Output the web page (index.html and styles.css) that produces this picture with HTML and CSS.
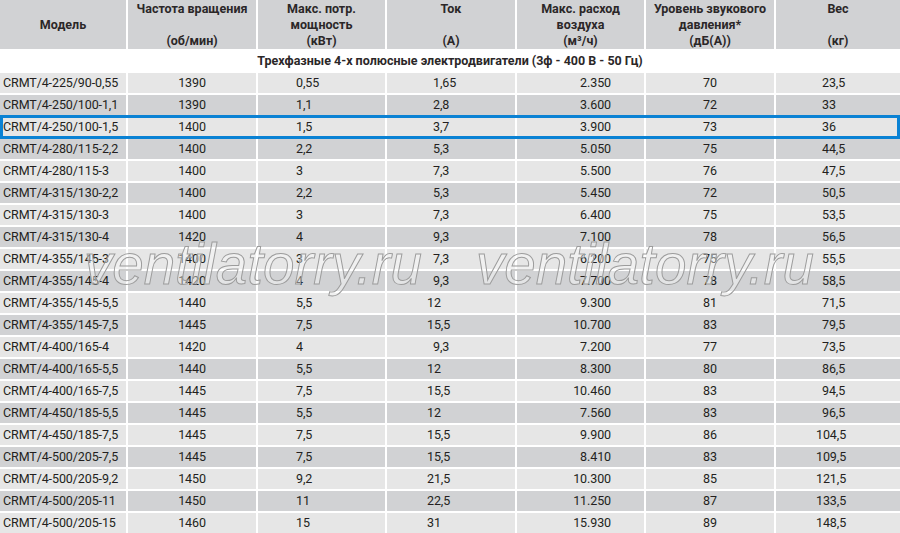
FILE: index.html
```html
<!DOCTYPE html>
<html lang="ru">
<head>
<meta charset="utf-8">
<title>CRMT/4</title>
<link rel="stylesheet" href="styles.css">
</head>
<body>
<div class="sheet">
  <div class="table">
    <div class="row head">
      <div class="h">Модель</div>
      <div class="h">Частота вращения<br><br>(об/мин)</div>
      <div class="h">Макс. потр.<br>мощность<br>(кВт)</div>
      <div class="h">Ток<br><br>(А)</div>
      <div class="h">Макс. расход<br>воздуха<br>(м³/ч)</div>
      <div class="h">Уровень звукового<br>давления*<br>(дБ(А))</div>
      <div class="h">Вес<br><br>(кг)</div>
    </div>
    <div class="group">Трехфазные 4-х полюсные электродвигатели (3ф - 400 В - 50 Гц)</div>
    <div class="body">
      <div class="row"><div class="c1">CRMT/4-225/90-0,55</div><div class="c2">1390</div><div class="c3">0,55</div><div class="c4">1,65</div><div class="c5">2.350</div><div class="c6">70</div><div class="c7">23,5</div></div>
      <div class="row"><div class="c1">CRMT/4-250/100-1,1</div><div class="c2">1390</div><div class="c3">1,1</div><div class="c4">2,8</div><div class="c5">3.600</div><div class="c6">72</div><div class="c7">33</div></div>
      <div class="row hl"><div class="c1">CRMT/4-250/100-1,5</div><div class="c2">1400</div><div class="c3">1,5</div><div class="c4">3,7</div><div class="c5">3.900</div><div class="c6">73</div><div class="c7">36</div></div>
      <div class="row"><div class="c1">CRMT/4-280/115-2,2</div><div class="c2">1400</div><div class="c3">2,2</div><div class="c4">5,3</div><div class="c5">5.050</div><div class="c6">75</div><div class="c7">44,5</div></div>
      <div class="row"><div class="c1">CRMT/4-280/115-3</div><div class="c2">1400</div><div class="c3">3</div><div class="c4">7,3</div><div class="c5">5.500</div><div class="c6">76</div><div class="c7">47,5</div></div>
      <div class="row"><div class="c1">CRMT/4-315/130-2,2</div><div class="c2">1400</div><div class="c3">2,2</div><div class="c4">5,3</div><div class="c5">5.450</div><div class="c6">72</div><div class="c7">50,5</div></div>
      <div class="row"><div class="c1">CRMT/4-315/130-3</div><div class="c2">1400</div><div class="c3">3</div><div class="c4">7,3</div><div class="c5">6.400</div><div class="c6">75</div><div class="c7">53,5</div></div>
      <div class="row"><div class="c1">CRMT/4-315/130-4</div><div class="c2">1420</div><div class="c3">4</div><div class="c4">9,3</div><div class="c5">7.100</div><div class="c6">78</div><div class="c7">56,5</div></div>
      <div class="row"><div class="c1">CRMT/4-355/145-3</div><div class="c2">1400</div><div class="c3">3</div><div class="c4">7,3</div><div class="c5">6.200</div><div class="c6">75</div><div class="c7">55,5</div></div>
      <div class="row"><div class="c1">CRMT/4-355/145-4</div><div class="c2">1420</div><div class="c3">4</div><div class="c4">9,3</div><div class="c5">7.700</div><div class="c6">78</div><div class="c7">58,5</div></div>
      <div class="row"><div class="c1">CRMT/4-355/145-5,5</div><div class="c2">1440</div><div class="c3">5,5</div><div class="c4 wide">12</div><div class="c5">9.300</div><div class="c6">81</div><div class="c7">71,5</div></div>
      <div class="row"><div class="c1">CRMT/4-355/145-7,5</div><div class="c2">1445</div><div class="c3">7,5</div><div class="c4 wide">15,5</div><div class="c5">10.700</div><div class="c6">83</div><div class="c7">79,5</div></div>
      <div class="row"><div class="c1">CRMT/4-400/165-4</div><div class="c2">1420</div><div class="c3">4</div><div class="c4">9,3</div><div class="c5">7.200</div><div class="c6">77</div><div class="c7">73,5</div></div>
      <div class="row"><div class="c1">CRMT/4-400/165-5,5</div><div class="c2">1440</div><div class="c3">5,5</div><div class="c4 wide">12</div><div class="c5">8.300</div><div class="c6">80</div><div class="c7">86,5</div></div>
      <div class="row"><div class="c1">CRMT/4-400/165-7,5</div><div class="c2">1445</div><div class="c3">7,5</div><div class="c4 wide">15,5</div><div class="c5">10.460</div><div class="c6">83</div><div class="c7">94,5</div></div>
      <div class="row"><div class="c1">CRMT/4-450/185-5,5</div><div class="c2">1445</div><div class="c3">5,5</div><div class="c4 wide">12</div><div class="c5">7.560</div><div class="c6">83</div><div class="c7">96,5</div></div>
      <div class="row"><div class="c1">CRMT/4-450/185-7,5</div><div class="c2">1445</div><div class="c3">7,5</div><div class="c4 wide">15,5</div><div class="c5">9.900</div><div class="c6">86</div><div class="c7 wide">104,5</div></div>
      <div class="row"><div class="c1">CRMT/4-500/205-7,5</div><div class="c2">1445</div><div class="c3">7,5</div><div class="c4 wide">15,5</div><div class="c5">8.410</div><div class="c6">83</div><div class="c7 wide">109,5</div></div>
      <div class="row"><div class="c1">CRMT/4-500/205-9,2</div><div class="c2">1450</div><div class="c3">9,2</div><div class="c4 wide">21,5</div><div class="c5">10.300</div><div class="c6">85</div><div class="c7 wide">121,5</div></div>
      <div class="row"><div class="c1">CRMT/4-500/205-11</div><div class="c2">1450</div><div class="c3">11</div><div class="c4 wide">22,5</div><div class="c5">11.250</div><div class="c6">87</div><div class="c7 wide">133,5</div></div>
      <div class="row"><div class="c1">CRMT/4-500/205-15</div><div class="c2">1460</div><div class="c3">15</div><div class="c4 wide">31</div><div class="c5">15.930</div><div class="c6">89</div><div class="c7 wide">148,5</div></div>
    </div>
  </div>
  <svg class="watermark" width="900" height="533" viewBox="0 0 900 533" aria-hidden="true">
    <text x="84" y="284" textLength="338" lengthAdjust="spacingAndGlyphs">ventilatorry.ru</text>
    <text x="476" y="284" textLength="338" lengthAdjust="spacingAndGlyphs">ventilatorry.ru</text>
  </svg>
</div>
</body>
</html>
```

FILE: styles.css
```css
html, body {
  margin: 0;
  padding: 0;
  background: #ffffff;
}

.sheet {
  position: relative;
  width: 900px;
  height: 533px;
  overflow: hidden;
  font-family: Roboto, "Noto Sans", sans-serif;
  color: #231f20;
}

.table {
  display: flex;
  flex-direction: column;
}

.row {
  display: grid;
  grid-template-columns: 126px 128px 127px 128px 127px 128px 124px;
  column-gap: 2px;
  background: #ffffff;
}

.head {
  height: 49px;
}

.h {
  background: #d1d2d4;
  font-weight: 700;
  font-size: 12.5px;
  line-height: 16px;
  text-align: center;
  display: flex;
  align-items: center;
  justify-content: center;
  color: #2b2728;
}

.group {
  height: 24px;
  line-height: 24px;
  text-align: center;
  font-weight: 700;
  font-size: 12.5px;
  background: #ffffff;
  color: #2b2728;
}

.body {
  display: flex;
  flex-direction: column;
  row-gap: 2px;
}

.body .row > div {
  height: 20px;
  line-height: 20px;
  font-size: 12.5px;
  letter-spacing: -0.1px;
  white-space: nowrap;
  background: #e6e6e6;
}

.body .row:nth-child(even) > div {
  background: #d1d2d4;
}

.c1 { padding-left: 3px; }
.c2 { text-align: center; }
.c3 { padding-left: 38px; }
.c4 { padding-left: 46px; }
.c4.wide { padding-left: 40px; }
.c5 { text-align: right; padding-right: 33px; }
.c6 { text-align: center; }
.c7 { padding-left: 46px; }
.c7.wide { padding-left: 40px; }

.hl {
  position: relative;
}

.hl::after {
  content: "";
  position: absolute;
  left: 0;
  right: 0;
  top: -2px;
  bottom: -2px;
  border: 3px solid #0a82d4;
  pointer-events: none;
}

.watermark {
  position: absolute;
  left: 0;
  top: 0;
  pointer-events: none;
  z-index: 2;
}

.watermark text {
  font-family: "Liberation Sans", Arial, sans-serif;
  font-style: italic;
  font-size: 57px;
  fill: rgba(255, 255, 255, 0.4);
  stroke: #9c9c9c;
  stroke-width: 1px;
}
```
